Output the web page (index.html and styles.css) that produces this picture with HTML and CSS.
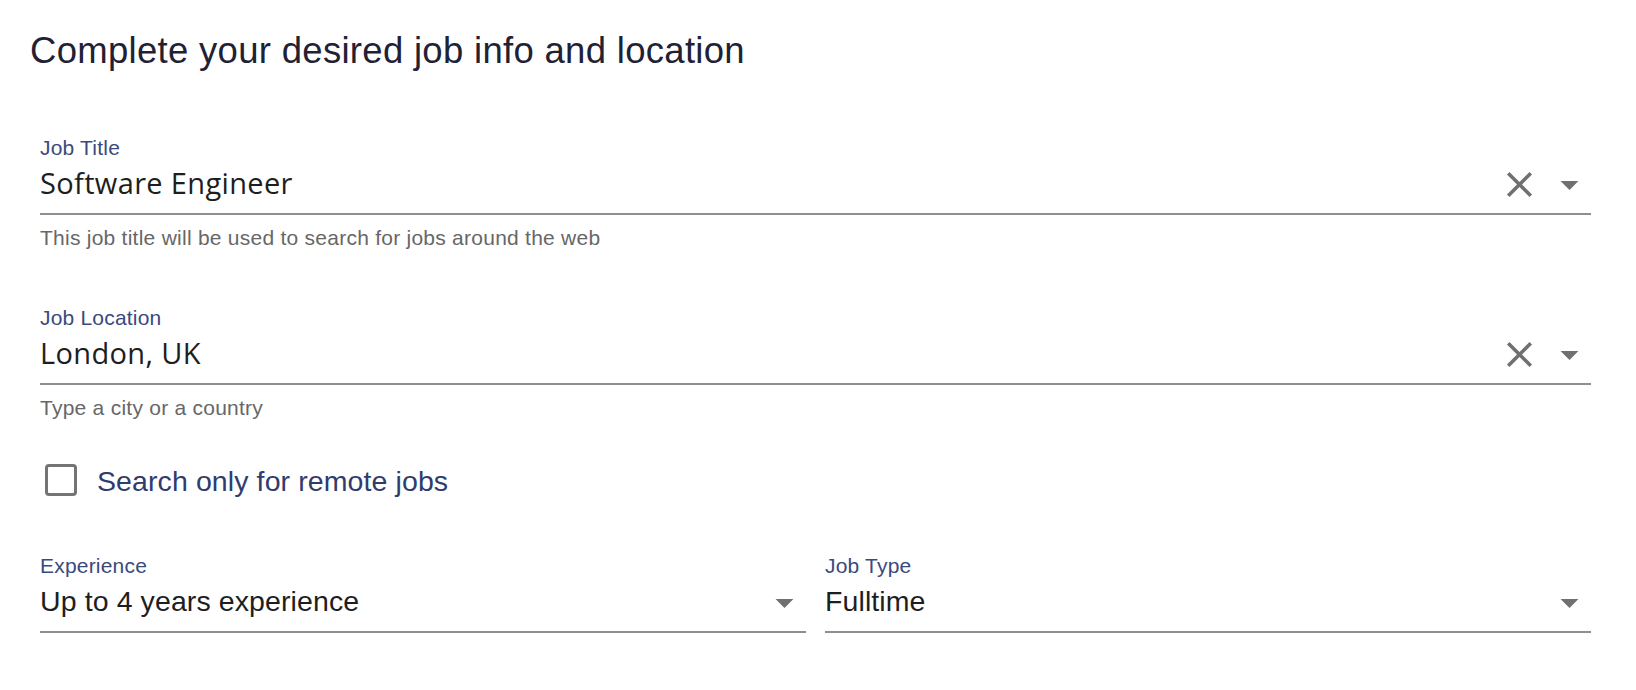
FILE: index.html
```html
<!DOCTYPE html>
<html lang="en">
<head>
<meta charset="utf-8">
<title>Job info</title>
<link rel="stylesheet" href="styles.css">
</head>
<body>
<div class="page">
  <h1 class="title">Complete your desired job info and location</h1>
  <form class="form">
    <div class="field">
      <label class="field-label">Job Title</label>
      <div class="input-row">
        <span class="value value-geo">Software Engineer</span>
        <span class="icons">
          <svg class="icon" viewBox="0 0 24 24"><path d="M19 6.41 17.59 5 12 10.59 6.41 5 5 6.41 10.59 12 5 17.59 6.41 19 12 13.41 17.59 19 19 17.59 13.41 12z"/></svg>
          <svg class="icon" viewBox="0 0 24 24"><path d="M7 10l5 5 5-5z"/></svg>
        </span>
      </div>
      <p class="helper">This job title will be used to search for jobs around the web</p>
    </div>

    <div class="field field-next">
      <label class="field-label">Job Location</label>
      <div class="input-row">
        <span class="value value-geo">London, UK</span>
        <span class="icons">
          <svg class="icon" viewBox="0 0 24 24"><path d="M19 6.41 17.59 5 12 10.59 6.41 5 5 6.41 10.59 12 5 17.59 6.41 19 12 13.41 17.59 19 19 17.59 13.41 12z"/></svg>
          <svg class="icon" viewBox="0 0 24 24"><path d="M7 10l5 5 5-5z"/></svg>
        </span>
      </div>
      <p class="helper">Type a city or a country</p>
    </div>

    <label class="check-row">
      <span class="checkbox"></span>
      <span class="check-label">Search only for remote jobs</span>
    </label>

    <div class="two-col">
      <div class="field">
        <label class="field-label">Experience</label>
        <div class="input-row">
          <span class="value">Up to 4 years experience</span>
          <span class="icons">
            <svg class="icon" viewBox="0 0 24 24"><path d="M7 10l5 5 5-5z"/></svg>
          </span>
        </div>
      </div>
      <div class="field">
        <label class="field-label">Job Type</label>
        <div class="input-row">
          <span class="value">Fulltime</span>
          <span class="icons">
            <svg class="icon" viewBox="0 0 24 24"><path d="M7 10l5 5 5-5z"/></svg>
          </span>
        </div>
      </div>
    </div>
  </form>
</div>
</body>
</html>
```

FILE: styles.css
```css
* {
  box-sizing: border-box;
}

html, body {
  margin: 0;
  padding: 0;
  background: #ffffff;
}

body {
  font-family: "Liberation Sans", Arial, sans-serif;
  color: #222222;
}

.page {
  padding: 30.5px 35px 0 30px;
}

.title {
  margin: 0;
  font-size: 36.5px;
  line-height: 40px;
  letter-spacing: 0.3px;
  font-weight: 400;
  color: #1f2235;
}

.form {
  padding: 65px 10px 0 10px;
  display: flex;
  flex-direction: column;
}

.field {
  display: flex;
  flex-direction: column;
}

.field-next {
  margin-top: 55.5px;
}

.field-label {
  font-size: 21px;
  line-height: 24px;
  letter-spacing: 0.2px;
  color: #3b4a7c;
}

.input-row {
  display: flex;
  align-items: center;
  height: 55.5px;
  border-bottom: 2px solid #8e8e8e;
}

.value {
  flex: 1;
  font-size: 28.5px;
  line-height: 34px;
  letter-spacing: 0.1px;
  margin-bottom: 7.5px;
  color: #1e1e1e;
  white-space: nowrap;
}

.value-geo {
  font-family: "Open Sans", Lato, sans-serif;
  font-size: 29px;
  letter-spacing: 0.35px;
}

.icons {
  display: flex;
  align-items: center;
  gap: 7.5px;
  margin-bottom: 3px;
}

.icon {
  width: 43px;
  height: 43px;
  fill: #707070;
  display: block;
}

.helper {
  margin: 11px 0 0 0;
  font-size: 21px;
  line-height: 24px;
  letter-spacing: 0.25px;
  color: #676767;
}

.check-row {
  display: flex;
  align-items: center;
  margin-top: 44px;
  margin-left: 4.5px;
  gap: 20.5px;
}

.checkbox {
  width: 32px;
  height: 32px;
  border: 3px solid #747474;
  border-radius: 4px;
  flex: none;
}

.check-label {
  font-size: 28.5px;
  line-height: 30px;
  letter-spacing: 0.1px;
  padding-top: 2px;
  color: #2f3c6d;
}

.two-col {
  display: grid;
  grid-template-columns: 1fr 1fr;
  column-gap: 19px;
  margin-top: 57.5px;
}
```
